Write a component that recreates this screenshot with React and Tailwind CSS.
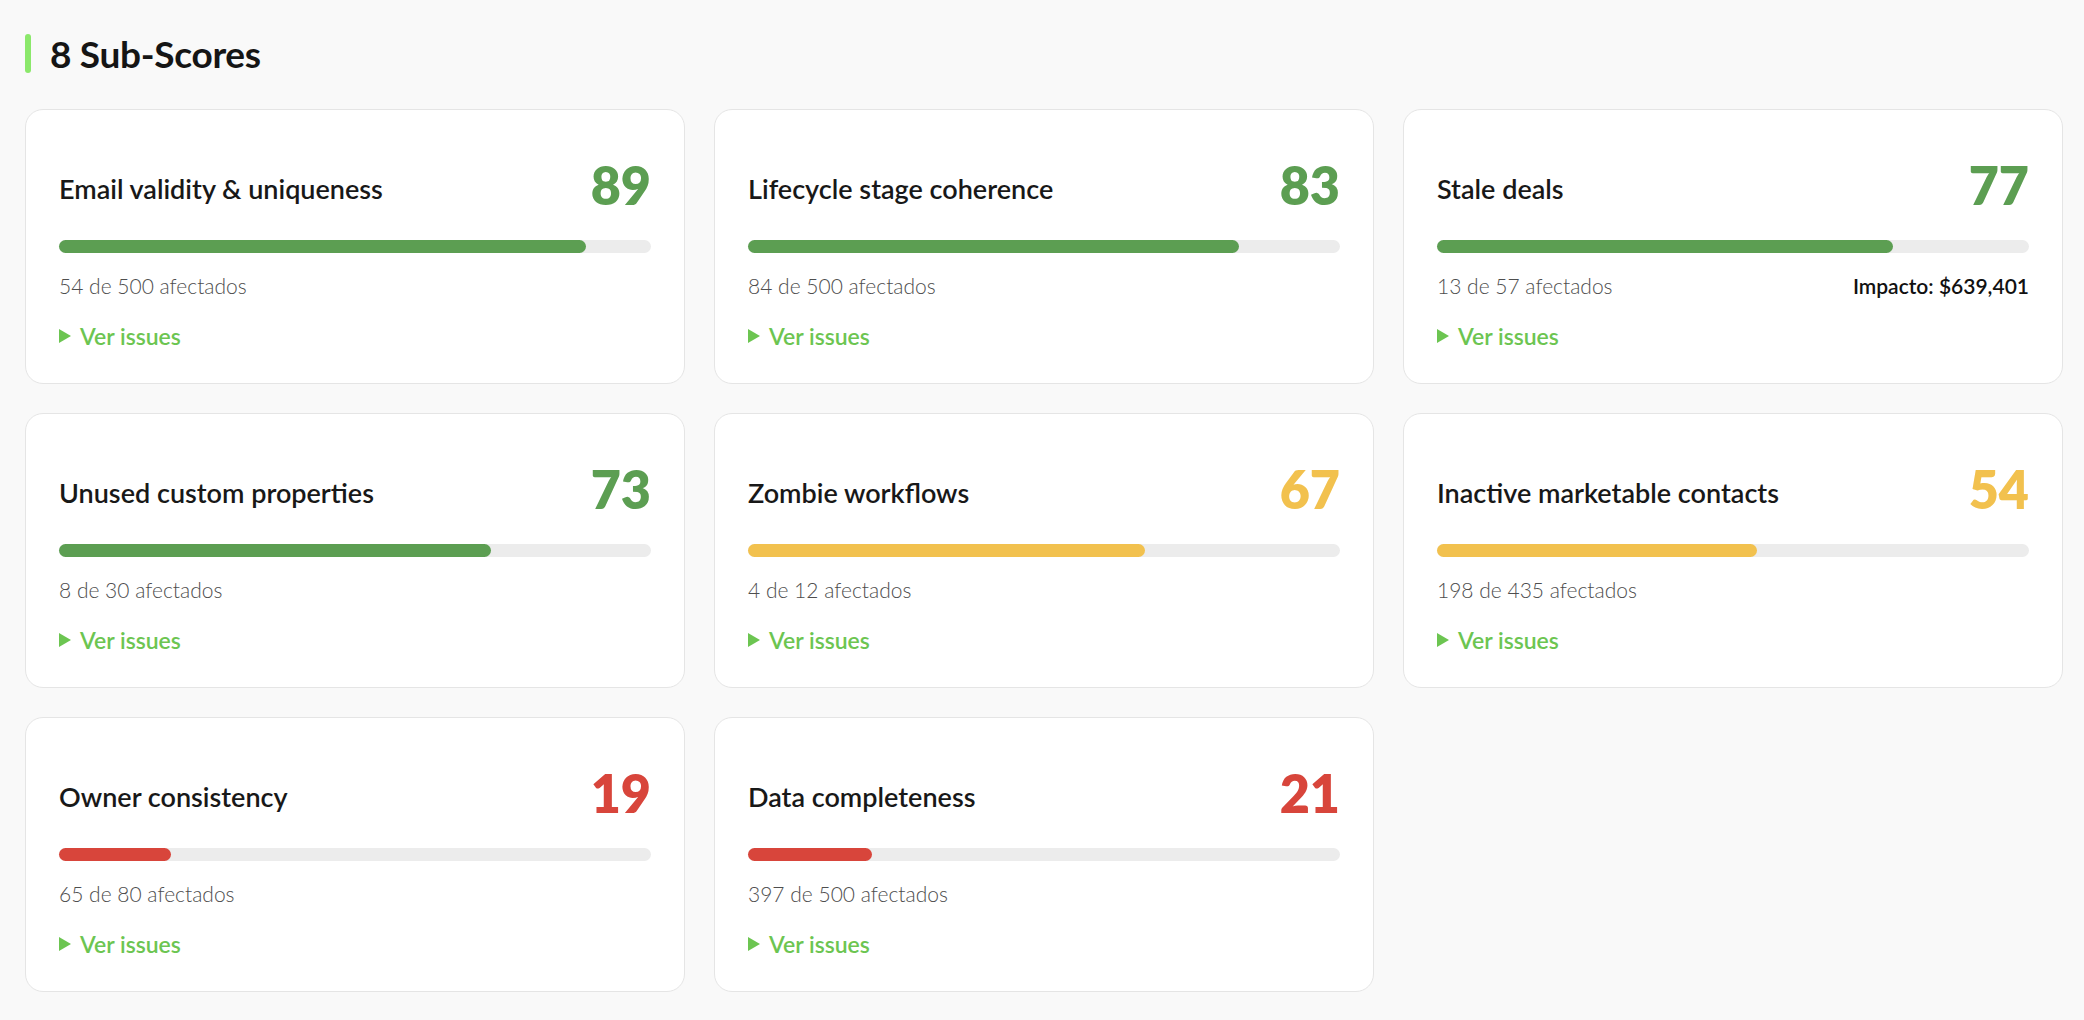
const items = [
  ["Email validity & uniqueness", 89, "54 de 500 afectados", "g"],
  ["Lifecycle stage coherence", 83, "84 de 500 afectados", "g"],
  ["Stale deals", 77, "13 de 57 afectados", "g", "Impacto: $639,401"],
  ["Unused custom properties", 73, "8 de 30 afectados", "g"],
  ["Zombie workflows", 67, "4 de 12 afectados", "y"],
  ["Inactive marketable contacts", 54, "198 de 435 afectados", "y"],
  ["Owner consistency", 19, "65 de 80 afectados", "r"],
  ["Data completeness", 21, "397 de 500 afectados", "r"],
];
const txt = { g: "text-[#5c9e52]", y: "text-[#f2c14e]", r: "text-[#d8453b]" };
const bg = { g: "bg-[#5c9e52]", y: "bg-[#f2c14e]", r: "bg-[#d8453b]" };

export default function App() {
  return (
    <div className="min-h-[1020px] bg-[#f9f9f9] px-[25px] pt-[34px]" style={{ fontFamily: "Lato, 'Open Sans', sans-serif" }}>
      <div className="flex items-center gap-[19px] h-[39px]">
        <div className="w-[6px] h-[39px] rounded-full bg-[#8be86b]" />
        <h2 className="text-[37px] font-bold text-[#151515] tracking-[-0.3px]">8 Sub-Scores</h2>
      </div>
      <div className="grid grid-cols-3 gap-[29px] mt-[36px] mr-[-4px]">
        {items.map(([t, s, a, c, imp]) => (
          <div key={t} className="h-[275px] bg-white border border-[#e5e5e5] rounded-[18px] px-[33px] pt-[44px]">
            <div className="flex justify-between items-center h-[62px]">
              <div className="text-[27px] font-semibold text-[#181818] mt-[8px]">{t}</div>
              <div className={`text-[52px] font-extrabold leading-none ${txt[c]}`}>{s}</div>
            </div>
            <div className="mt-[24px] h-[13px] rounded-full bg-[#ececec]">
              <div className={`h-full rounded-full ${bg[c]}`} style={{ width: s + "%" }} />
            </div>
            <div className="flex justify-between items-center mt-[19px] h-[28px]">
              <span className="text-[21px] text-[#4e4e4e] font-light">{a}</span>
              {imp && <span className="text-[21px] font-semibold text-[#111]">{imp}</span>}
            </div>
            <div className="flex items-center gap-[9px] mt-[19px] text-[23px] font-semibold text-[#6cc551]">
              <svg width="12" height="14" viewBox="0 0 12 14"><path d="M0 0L12 7L0 14Z" fill="#6cc551" /></svg>
              Ver issues
            </div>
          </div>
        ))}
      </div>
    </div>
  );
}
